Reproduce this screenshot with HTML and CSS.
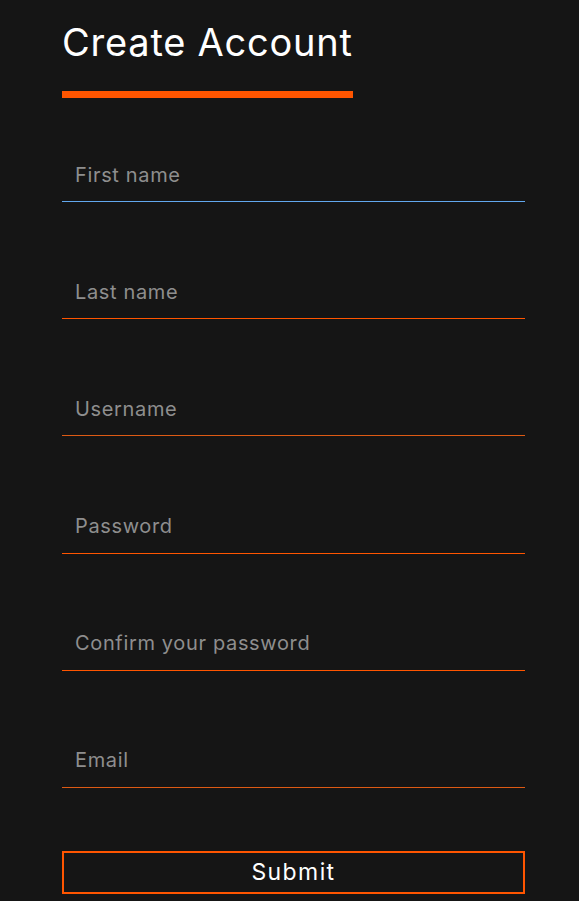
FILE: index.html
```html
<!DOCTYPE html>
<html lang="en">
<head>
<meta charset="utf-8">
<title>Create Account</title>
<link rel="stylesheet" href="styles.css">
</head>
<body>
<main class="signup">
  <h1 class="title">Create Account</h1>
  <div class="title-bar"></div>
  <form class="form" onsubmit="return false">
    <input class="field field--focus" type="text" placeholder="First name" autofocus>
    <input class="field" type="text" placeholder="Last name">
    <input class="field field--dim" type="text" placeholder="Username">
    <input class="field" type="password" placeholder="Password">
    <input class="field" type="password" placeholder="Confirm your password">
    <input class="field field--dim" type="email" placeholder="Email">
    <button class="submit" type="submit">Submit</button>
  </form>
</main>
</body>
</html>
```
FILE: styles.css
```css
html, body {
  margin: 0;
  background: #151515;
}
body {
  font-family: Inter, "Open Sans", "DejaVu Sans", sans-serif;
  color: #fff;
}
.signup {
  width: 463px;
  padding: 19px 0 0 62px;
}
.title {
  margin: 0;
  font-size: 38px;
  line-height: 46px;
  font-weight: 400;
  letter-spacing: 0.77px;
  color: #fff;
}
.title-bar {
  margin-top: 26px;
  width: 291px;
  height: 7px;
  background: #ff5500;
}
.form {
  margin-top: 52px;
  display: flex;
  flex-direction: column;
  gap: 65.2px;
}
.field {
  box-sizing: border-box;
  width: 100%;
  height: 52px;
  padding: 0 13px 2px;
  margin: 0;
  border: 0;
  border-bottom: 1px solid #ff5500;
  border-radius: 0;
  background: transparent;
  color: #ddd;
  font-family: inherit;
  font-size: 20px;
  letter-spacing: 0.65px;
  outline: none;
  caret-color: #fff;
}
.field::placeholder {
  color: #8e8e8e;
}
.field--focus {
  border-bottom-color: #62a8ee;
}
.field--dim {
  border-bottom-color: #dd5a14;
}
.submit {
  box-sizing: border-box;
  width: 100%;
  height: 43px;
  margin-top: -2.5px;
  border: 2px solid #ff5500;
  background: transparent;
  color: #fff;
  font-family: inherit;
  font-size: 23px;
  letter-spacing: 1.4px;
  cursor: pointer;
}
```
